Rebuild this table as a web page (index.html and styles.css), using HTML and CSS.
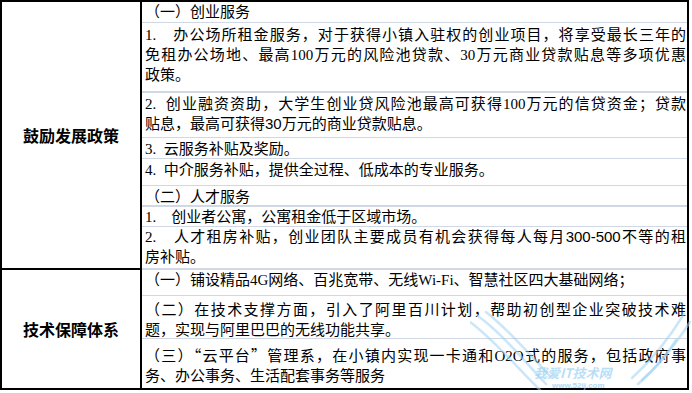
FILE: index.html
```html
<!DOCTYPE html>
<html lang="zh-CN">
<head>
<meta charset="utf-8">
<title>政策表</title>
<link rel="stylesheet" href="styles.css">
</head>
<body>
<div class="sheet">
  <div class="label first">鼓励发展政策</div>
  <div class="list">
    <div class="row r1">（一）创业服务</div>
    <div class="row r2 thick">
      <span class="ln fill">1.　办公场所租金服务，对于获得小镇入驻权的创业项目，将享受最长三年的</span>
      <span class="ln fill">免租办公场地、最高100万元的风险池贷款、30万元商业贷款贴息等多项优惠</span>
      <span class="ln">政策。</span>
    </div>
    <div class="row r3">
      <span class="ln fill">2.&nbsp;&nbsp;创业融资资助，大学生创业贷风险池最高可获得100万元的信贷资金；贷款</span>
      <span class="ln">贴息，最高可获得<span class="sans">30</span>万元的商业贷款贴息。</span>
    </div>
    <div class="row r4">3.&nbsp;&nbsp;云服务补贴及奖励。</div>
    <div class="row r5">4.&nbsp;&nbsp;中介服务补贴，提供全过程、低成本的专业服务。</div>
    <div class="row r6 thick">（二）人才服务</div>
    <div class="row r7">1.　创业者公寓，公寓租金低于区域市场。</div>
    <div class="row r8 thick">
      <span class="ln fill">2.　人才租房补贴，创业团队主要成员有机会获得每人每月<span class="sans">300-500</span>不等的租</span>
      <span class="ln">房补贴。</span>
    </div>
  </div>
  <div class="label">技术保障体系</div>
  <div class="list">
    <div class="row r9">（一）铺设精品4G网络、百兆宽带、无线Wi-Fi、智慧社区四大基础网络；</div>
    <div class="row r10">
      <span class="ln fill">（二）在技术支撑方面，引入了阿里百川计划，帮助初创型企业突破技术难</span>
      <span class="ln">题，实现与阿里巴巴的无线功能共享。</span>
    </div>
    <div class="row r11 last">
      <span class="ln fill">（三）<span class="cjk">“云平台”</span>管理系，在小镇内实现一卡通和O2O式的服务，包括政府事</span>
      <span class="ln">务、办公事务、生活配套事务等服务</span>
    </div>
  </div>
  <svg class="watermark" width="222" height="93" viewBox="0 0 222 93">
    <path d="M0 22 C 22 38, 42 62, 70 90" />
    <path d="M8 16 C 30 32, 50 56, 76 84" />
    <path d="M16 12 C 36 28, 56 50, 80 76" />
    <path d="M220 22 C 205 45, 190 65, 168 84" />
    <path d="M214 14 C 198 40, 182 60, 162 78" />
    <path d="M206 40 C 196 56, 186 68, 172 80" />
    <text class="wm-main" x="64" y="78">我爱IT技术网</text>
    <text class="wm-url" x="82" y="88">www.52ij.com</text>
  </svg>
</div>
</body>
</html>
```
FILE: styles.css
```css
html, body {
  margin: 0;
  padding: 0;
  background: #fff;
}

.sheet {
  position: relative;
  width: 689px;
  height: 390px;
  box-sizing: border-box;
  border: 2px solid #000;
  display: grid;
  grid-template-columns: 140px 1fr;
  grid-template-rows: 268px 118px;
  font-family: "Liberation Serif", "Noto Sans CJK SC", serif;
  font-size: 15px;
  line-height: 20px;
  color: #000;
}

.label {
  border-right: 2px solid #000;
  display: flex;
  align-items: center;
  justify-content: center;
  font-family: "Noto Sans CJK SC", sans-serif;
  font-weight: 700;
  font-size: 16px;
}

.label.first {
  border-bottom: 2px solid #000;
}

.list {
  display: flex;
  flex-direction: column;
  min-width: 0;
}

.row {
  box-sizing: border-box;
  border-bottom: 1px solid #d0d7e5;
  padding: 0 1px 0 3px;
  overflow: hidden;
  white-space: nowrap;
}

.row.thick {
  border-bottom-width: 2px;
}

.row.last {
  border-bottom: 0;
}

.ln {
  display: block;
}

.ln.fill {
  text-align: justify;
  text-align-last: justify;
}

.sans {
  font-family: "Liberation Sans", "Noto Sans CJK SC", sans-serif;
}

.cjk {
  font-family: "Noto Sans CJK SC", sans-serif;
  font-feature-settings: "fwid" 1;
}

.r1 { height: 21px; padding-top: 0; }
.r2 { height: 70px; padding-top: 2px; }
.r3 { height: 45px; padding-top: 1px; }
.r4 { height: 21px; padding-top: 1px; }
.r5 { height: 27px; padding-top: 1px; }
.r6 { height: 21px; padding-top: 1px; }
.r7 { height: 20px; padding-top: 0; }
.r8 { height: 43px; padding-top: 0; }
.r9 { height: 26px; padding-top: 0; }
.r10 { height: 43px; padding-top: 4px; }
.r11 { height: 49px; padding-top: 6px; }

.watermark {
  position: absolute;
  left: 468px;
  top: 298px;
  pointer-events: none;
}

.watermark path {
  fill: none;
  stroke: #9fd2f3;
  stroke-width: 2.5;
  stroke-linecap: round;
  opacity: 0.55;
}

.wm-main {
  font-family: "Noto Sans CJK SC", sans-serif;
  font-weight: 700;
  font-style: italic;
  font-size: 13px;
  fill: #8ccbf2;
  opacity: 0.6;
}

.wm-url {
  font-family: "Liberation Sans", sans-serif;
  font-weight: 700;
  font-size: 8px;
  fill: #8ccbf2;
  opacity: 0.7;
}
```
